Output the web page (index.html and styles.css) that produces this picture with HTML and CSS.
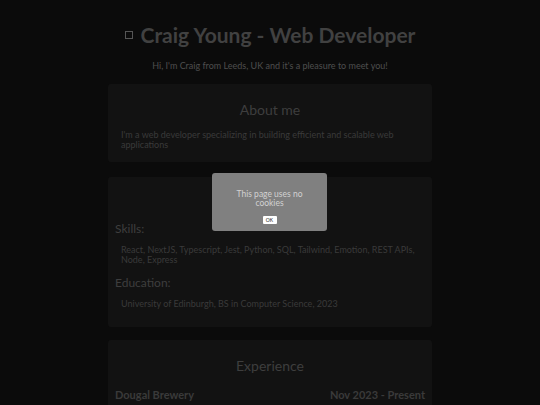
FILE: index.html
```html
<!DOCTYPE html>
<html lang="en">
<head>
    <meta charset="UTF-8">
    <meta name="viewport" content="width=device-width, initial-scale=1.0">
    <title>Craig Young - Web Developer</title>
    <link rel="stylesheet" href="styles.css">
</head>
<body>
    <div class="page">
        <header class="header">
            <h1 class="title"><span class="logo"></span>Craig Young - Web Developer</h1>
            <p class="intro">Hi, I'm Craig from Leeds, UK and it's a pleasure to meet you!</p>
        </header>

        <section class="card card-about">
            <h2 class="card-title">About me</h2>
            <p class="card-text">I'm a web developer specializing in building efficient and scalable web applications</p>
        </section>

        <section class="card card-skills">
            <h2 class="card-title">Skills &amp; Education</h2>
            <h3 class="sub-title">Skills:</h3>
            <p class="card-text">React, NextJS, Typescript, Jest, Python, SQL, Tailwind, Emotion, REST APIs, Node, Express</p>
            <h3 class="sub-title">Education:</h3>
            <p class="card-text">University of Edinburgh, BS in Computer Science, 2023</p>
        </section>

        <section class="card">
            <h2 class="card-title">Experience</h2>
            <div class="job">
                <span>Dougal Brewery</span>
                <span>Nov 2023 - Present</span>
            </div>
        </section>
    </div>

    <div class="cookie-box">
        <p class="cookie-text">This page uses no cookies</p>
        <button class="cookie-btn">OK</button>
    </div>
</body>
</html>
```

FILE: styles.css
```css
body {
    margin: 0;
    background-color: #0b0b0b;
    font-family: Lato, "DejaVu Sans", sans-serif;
    color: #3c3c3c;
    overflow: hidden;
}

.page {
    width: 324px;
    margin: 0 auto;
    padding-top: 22px;
}

.header {
    text-align: center;
}

.title {
    margin: 0;
    font-size: 21px;
    font-weight: bold;
    color: #414141;
    display: flex;
    align-items: center;
    justify-content: center;
    gap: 8px;
}

.logo {
    width: 6px;
    height: 6px;
    border: 1px solid #555;
}

.intro {
    margin: 13px 0 13px;
    font-size: 9px;
    color: #4e4e4e;
}

.card {
    background-color: #121212;
    border-radius: 3px;
    padding: 17px 7px 14px;
    margin-bottom: 14px;
}

.card-about {
    padding-bottom: 12px;
    margin-bottom: 15px;
}

.card-skills {
    padding-bottom: 18px;
    margin-bottom: 13px;
}

.card-title {
    margin: 0 0 12px;
    text-align: center;
    font-size: 14px;
    font-weight: normal;
    color: #3e3e3e;
}

.card-text {
    margin: 0 6px;
    font-size: 9px;
    line-height: 10px;
    color: #3a3a3a;
}

.sub-title {
    margin: -2px 0 9px;
    font-size: 12px;
    font-weight: normal;
    color: #3e3e3e;
}

.card-text + .sub-title {
    margin-top: 10px;
}

.job {
    display: flex;
    justify-content: space-between;
    margin-top: 14px;
    font-size: 11px;
    font-weight: bold;
    color: #3a3a3a;
}

.cookie-box {
    position: absolute;
    left: 212px;
    top: 173px;
    width: 115px;
    height: 58px;
    box-sizing: border-box;
    background-color: #808080;
    border-radius: 3px;
    text-align: center;
    padding: 17px 22px 0;
}

.cookie-text {
    margin: 0 0 8px;
    font-size: 8.5px;
    line-height: 9px;
    color: #d2d2d2;
}

.cookie-btn {
    display: block;
    margin: 0 auto;
    width: 14px;
    height: 8px;
    padding: 0;
    border: none;
    border-radius: 1px;
    background-color: #fff;
    color: #222;
    font-family: inherit;
    font-size: 5px;
    line-height: 8px;
}
```
